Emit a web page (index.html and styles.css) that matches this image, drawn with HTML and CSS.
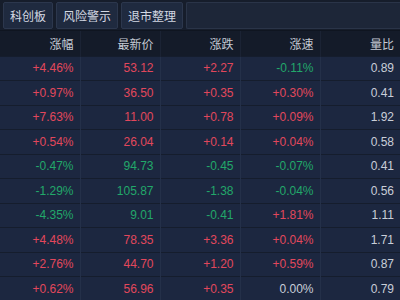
FILE: index.html
```html
<!DOCTYPE html>
<html lang="zh-CN">
<head>
    <meta charset="UTF-8">
    <meta name="viewport" content="width=device-width, initial-scale=1.0">
    <title>行情列表</title>
    <link rel="stylesheet" href="styles.css">
</head>
<body>
    <div class="tabs">
        <div class="tab">科创板</div>
        <div class="tab">风险警示</div>
        <div class="tab">退市整理</div>
        <div class="tab-rest"></div>
    </div>

    <table class="quotes">
        <thead>
            <tr>
                <th>涨幅</th>
                <th>最新价</th>
                <th>涨跌</th>
                <th>涨速</th>
                <th>量比</th>
            </tr>
        </thead>
        <tbody>
            <tr><td class="up">+4.46%</td><td class="up">53.12</td><td class="up">+2.27</td><td class="down">-0.11%</td><td>0.89</td></tr>
            <tr><td class="up">+0.97%</td><td class="up">36.50</td><td class="up">+0.35</td><td class="up">+0.30%</td><td>0.41</td></tr>
            <tr><td class="up">+7.63%</td><td class="up">11.00</td><td class="up">+0.78</td><td class="up">+0.09%</td><td>1.92</td></tr>
            <tr><td class="up">+0.54%</td><td class="up">26.04</td><td class="up">+0.14</td><td class="up">+0.04%</td><td>0.58</td></tr>
            <tr><td class="down">-0.47%</td><td class="down">94.73</td><td class="down">-0.45</td><td class="down">-0.07%</td><td>0.41</td></tr>
            <tr><td class="down">-1.29%</td><td class="down">105.87</td><td class="down">-1.38</td><td class="down">-0.04%</td><td>0.56</td></tr>
            <tr><td class="down">-4.35%</td><td class="down">9.01</td><td class="down">-0.41</td><td class="up">+1.81%</td><td>1.11</td></tr>
            <tr><td class="up">+4.48%</td><td class="up">78.35</td><td class="up">+3.36</td><td class="up">+0.04%</td><td>1.71</td></tr>
            <tr><td class="up">+2.76%</td><td class="up">44.70</td><td class="up">+1.20</td><td class="up">+0.59%</td><td>0.87</td></tr>
            <tr><td class="up">+0.62%</td><td class="up">56.96</td><td class="up">+0.35</td><td>0.00%</td><td>0.79</td></tr>
        </tbody>
    </table>
</body>
</html>
```

FILE: styles.css
```css
* {
    margin: 0;
    padding: 0;
    box-sizing: border-box;
}

body {
    background-color: #1b2539;
    font-family: "Liberation Sans", "Noto Sans CJK SC", sans-serif;
    font-size: 12px;
    color: #c9ced8;
    overflow: hidden;
}

/* Tab bar */
.tabs {
    display: flex;
    gap: 3px;
    height: 31px;
    padding: 2px 0 1px 3px;
    background-color: #161d2b;
    border-bottom: 1px solid #0f1520;
}

.tab {
    display: flex;
    align-items: center;
    padding: 0 6px;
    background-color: #1f2a3f;
    border: 1px solid #2c374d;
    border-radius: 2px;
    color: #d3d8e2;
    font-size: 12px;
}

.tab-rest {
    flex: 1;
    background-color: #1d2638;
    border: 1px solid #2a3448;
    border-right: none;
    border-radius: 2px 0 0 2px;
}

/* Quote table */
.quotes {
    width: 400px;
    border-collapse: collapse;
    table-layout: fixed;
}

.quotes th {
    height: 25px;
    padding: 0 6px 0 0;
    text-align: right;
    font-weight: normal;
    color: #c5cad4;
    background-color: #141b29;
    border-left: 1px solid #1b2334;
}

.quotes td {
    height: 24.5px;
    padding: 0 6px 0 0;
    text-align: right;
    background-color: #1c2740;
    border-top: 1px solid #151d2d;
    border-left: 1px solid #243049;
}

.quotes th:first-child,
.quotes td:first-child {
    border-left: none;
}

.up {
    color: #e2475c;
}

.down {
    color: #22a86a;
}
```
